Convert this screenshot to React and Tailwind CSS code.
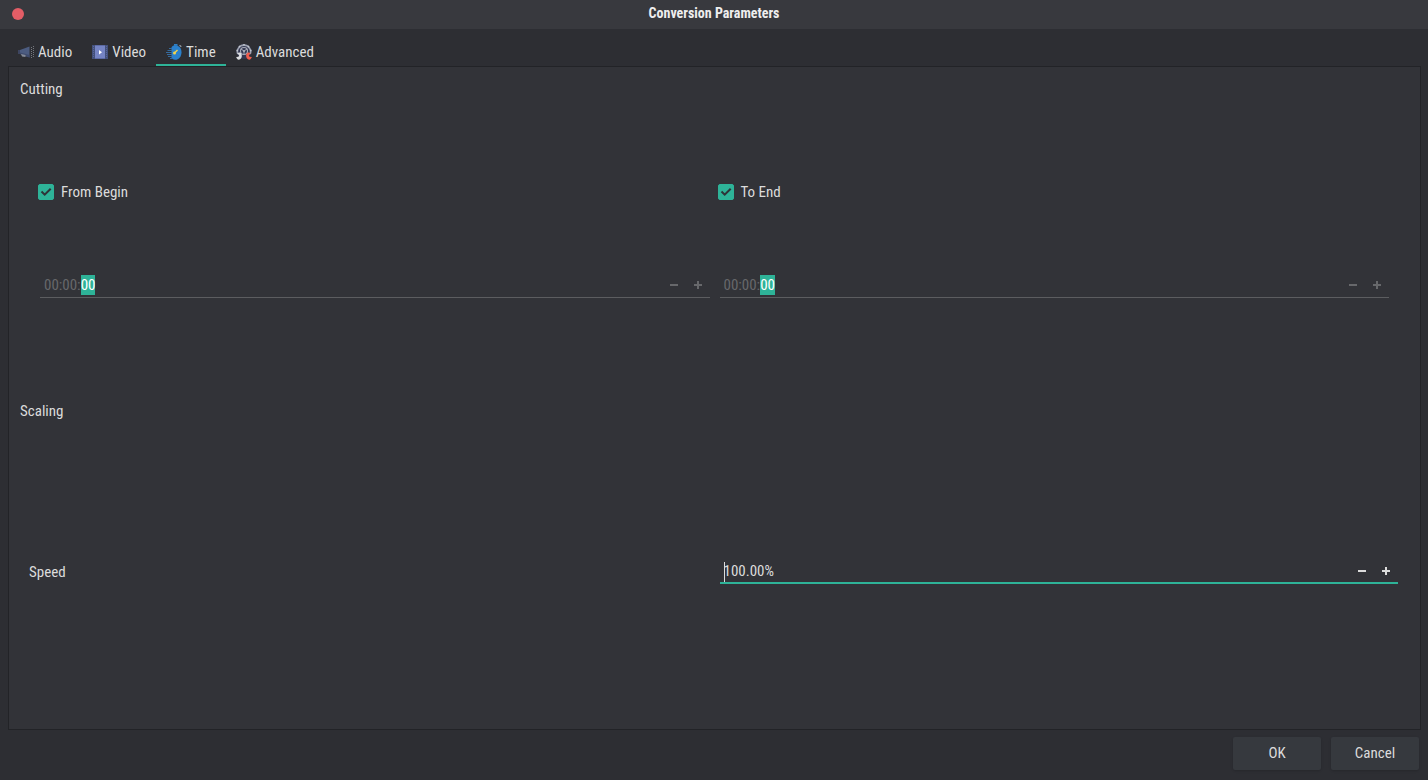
import { useState } from "react";

function AudioIcon() {
  return (
    <svg className="size-4" viewBox="0 0 16 16" aria-hidden="true">
      <path d="M0 6h2v4H0z" fill="#3d4560" />
      <path d="M2 6 11.500 2.500v11L2 10z" fill="#4c5c80" />
      <path d="M2 8.500 11.500 11v2.500L2 10z" fill="#3f4b6c" />
      <path d="M3 10 7.500 11v2L4 12.500z" fill="#868c98" />
      <path d="M13.500 3v11M15.500 2v12" stroke="#75787e" strokeWidth="1" strokeDasharray="1 1" fill="none" />
    </svg>
  );
}

function VideoIcon() {
  return (
    <svg className="size-4" viewBox="0 0 16 16" aria-hidden="true">
      <path d="M0 1h16v14H0z" fill="#43507c" />
      <path d="M3 2h10v12H3z" fill="#7584c4" />
      <path d="M3 1h10v1H3zM3 14h10v1H3z" fill="#5c6aa4" />
      <path d="M1.500 2v12M14.500 2v12" stroke="#5a6898" strokeWidth="1" strokeDasharray="1 1" fill="none" />
      <path d="M7 6v4.500L10 8.200z" fill="#fff" />
    </svg>
  );
}

function TimeIcon() {
  return (
    <svg className="size-4" viewBox="0 0 16 16" aria-hidden="true">
      <path d="M8 0h3.500v1.800H8z" fill="#2f7fc4" />
      <path d="m13.500 1.300 1.800 1.400" stroke="#9aa0a8" strokeWidth="1.200" />
      <path d="M9 1.200c4 0 6.500 3 6.500 7s-2.500 7.600-6.500 7.600c-1.500 0-2.800-.8-3.500-2V3.200C6.200 1.900 7.500 1.200 9 1.200z" fill="#2a80cc" />
      <path d="M3 4.500h3M1.500 6.500H6M0 8.500h6M1 10.500h5M2 12.500h4M4 14.500h2" stroke="#366b9e" strokeWidth="1" />
      <path d="M8.500 9 11.500 6" stroke="#f2d34c" strokeWidth="1.400" />
      <circle cx="8.500" cy="9" r="1.500" fill="#f2d34c" />
    </svg>
  );
}

function AdvancedIcon() {
  return (
    <svg className="size-4" viewBox="0 0 16 16" aria-hidden="true">
      <circle cx="8" cy="7.500" r="7.500" fill="#343852" />
      <path d="M1.800 10A6.600 6.600 0 1 1 14.200 10" fill="none" stroke="#9da2b0" strokeWidth="1.600" />
      <path d="M8 0v1.500M3 2l1 1M13 2l-1 1M.5 6.500H2M14 6.500h1.500" stroke="#c2c6ce" strokeWidth="1.400" />
      <circle cx="8" cy="7" r="3.500" fill="none" stroke="#a8acb8" strokeWidth="1.100" />
      <circle cx="8" cy="7" r="1.100" fill="#b8bcc6" />
      <path d="m5 5 3 2 3-2M8 7v3.500" fill="none" stroke="#a8acb8" strokeWidth="1" />
      <path d="M4 8.500c1.800.8 2.200 3 1.600 4.800-.5 1.500-1.600 2.500-3 2.500C1.500 15.500.5 14.500.2 13l2.300-.2.700-1.500-1.700-1.500C2 8.800 3 8.300 4 8.500z" fill="#dcdee1" />
      <path d="M12 8.500c-1.800.8-2.200 3-1.600 4.800.5 1.500 1.600 2.500 3 2.500 1.100-.3 2.100-1.300 2.400-2.800l-2.300-.2-.7-1.500 1.700-1.500c-.5-1-1.500-1.500-2.500-1.300z" fill="#f05c4c" />
    </svg>
  );
}

const tabs = [
  { name: "Audio", Icon: AudioIcon },
  { name: "Video", Icon: VideoIcon },
  { name: "Time", Icon: TimeIcon },
  { name: "Advanced", Icon: AdvancedIcon },
];

function StepButtons({ label }) {
  return (
    <>
      <button type="button" aria-label={`Decrease ${label}`} className="flex h-5 w-6 shrink-0 items-center justify-center">
        <svg className="size-2" viewBox="0 0 8 8" fill="currentColor" aria-hidden="true">
          <path d="M0 3h8v2H0z" />
        </svg>
      </button>
      <button type="button" aria-label={`Increase ${label}`} className="flex h-5 w-6 shrink-0 items-center justify-center">
        <svg className="size-2" viewBox="0 0 8 8" fill="currentColor" aria-hidden="true">
          <path d="M0 3h3V0h2v3h3v2H5v3H3V5H0z" />
        </svg>
      </button>
    </>
  );
}

function TimeField({ label }) {
  return (
    <div className="relative flex h-6 items-center border-b border-[#5c5d60] text-[#67686b]">
      <input aria-label={label} defaultValue="00:00:00" className="h-5 min-w-0 flex-1 bg-transparent px-1 outline-none" />
      <span aria-hidden="true" className="pointer-events-none absolute inset-y-0 left-1 flex items-center">
        <span className="invisible">00:00:</span>
        <span className="bg-[#2eb398] text-white">00</span>
      </span>
      <StepButtons label={label} />
    </div>
  );
}

function CheckField({ label }) {
  const [checked, setChecked] = useState(true);
  return (
    <label className="-ml-0.5 flex h-6 items-center gap-[7px]">
      <span className="relative flex size-4">
        <input
          type="checkbox"
          checked={checked}
          onChange={() => setChecked(!checked)}
          className="size-4 appearance-none rounded-xs border border-[#5c5d60] checked:border-[#2eb398] checked:bg-[#2eb398]"
        />
        {checked && (
          <svg className="pointer-events-none absolute inset-0 size-4" viewBox="0 0 16 16" fill="none" stroke="#2e3338" strokeWidth="2" aria-hidden="true">
            <path d="m3.500 7.500 3.200 3.200L12.700 4.700" />
          </svg>
        )}
      </span>
      {label}
    </label>
  );
}

export default function App() {
  const [active, setActive] = useState("Time");
  return (
    <div className="flex min-h-screen flex-col bg-[#2d2e33] font-['Ubuntu_Condensed','Roboto_Condensed','Liberation_Sans_Narrow',sans-serif] text-[15px] leading-5 text-[#dcdcdc]">
      <header className="grid h-[29px] grid-cols-[1fr_auto_1fr] items-center bg-[#38393e] px-3 pb-0.5">
        <button type="button" aria-label="Close" className="size-3 rounded-full bg-[#e35d66]" />
        <h1 className="pb-0.5 text-[14px] font-bold leading-5 text-[#eeeeee]">Conversion Parameters</h1>
      </header>

      <div role="tablist" className="mt-[9px] flex px-2">
        {tabs.map(({ name, Icon }) => (
          <button
            key={name}
            type="button"
            role="tab"
            aria-selected={active === name}
            onClick={() => setActive(name)}
            className={`flex h-7 items-center gap-1 border-b-2 px-2.5 pt-0.5 ${active === name ? "border-[#2eb398]" : "border-transparent"}`}
          >
            <Icon />
            {name}
          </button>
        ))}
      </div>

      <main className="ml-2 mr-[7px] flex flex-1 flex-col border border-[#222327] bg-[#323338] pb-2 pt-2.5">
        <section className="flex grow basis-0 flex-col">
          <h2 className="h-6 px-[11px] leading-6">Cutting</h2>
          <div className="grid flex-1 grid-cols-2 content-evenly gap-x-2.5 px-[31px] pb-8 pt-2.5">
            <CheckField label="From Begin" />
            <CheckField label="To End" />
            <TimeField label="Begin time" />
            <TimeField label="End time" />
          </div>
        </section>
        <section className="flex grow basis-0 flex-col">
          <h2 className="h-6 px-[11px] leading-6">Scaling</h2>
          <div className="grid flex-1 grid-cols-2 content-center items-center gap-x-3 pl-5 pr-[22px]">
            <label htmlFor="speed">Speed</label>
            <div className="relative flex h-6 items-center border-b-2 border-[#2eb398]">
              <input id="speed" defaultValue="100.00%" className="h-5 min-w-0 flex-1 bg-transparent px-1 outline-none" />
              <span aria-hidden="true" className="pointer-events-none absolute left-1 top-0.5 h-5 w-px bg-[#dcdcdc]" />
              <StepButtons label="speed" />
            </div>
          </div>
        </section>
      </main>

      <footer className="flex justify-end gap-2.5 pb-2.5 pr-[9px] pt-[7px]">
        <button type="button" className="h-[33px] w-[88px] rounded-xs bg-[#36393e] pb-0.5 shadow-sm">OK</button>
        <button type="button" className="h-[33px] w-[88px] rounded-xs bg-[#36393e] pb-0.5 shadow-sm">Cancel</button>
      </footer>
    </div>
  );
}
